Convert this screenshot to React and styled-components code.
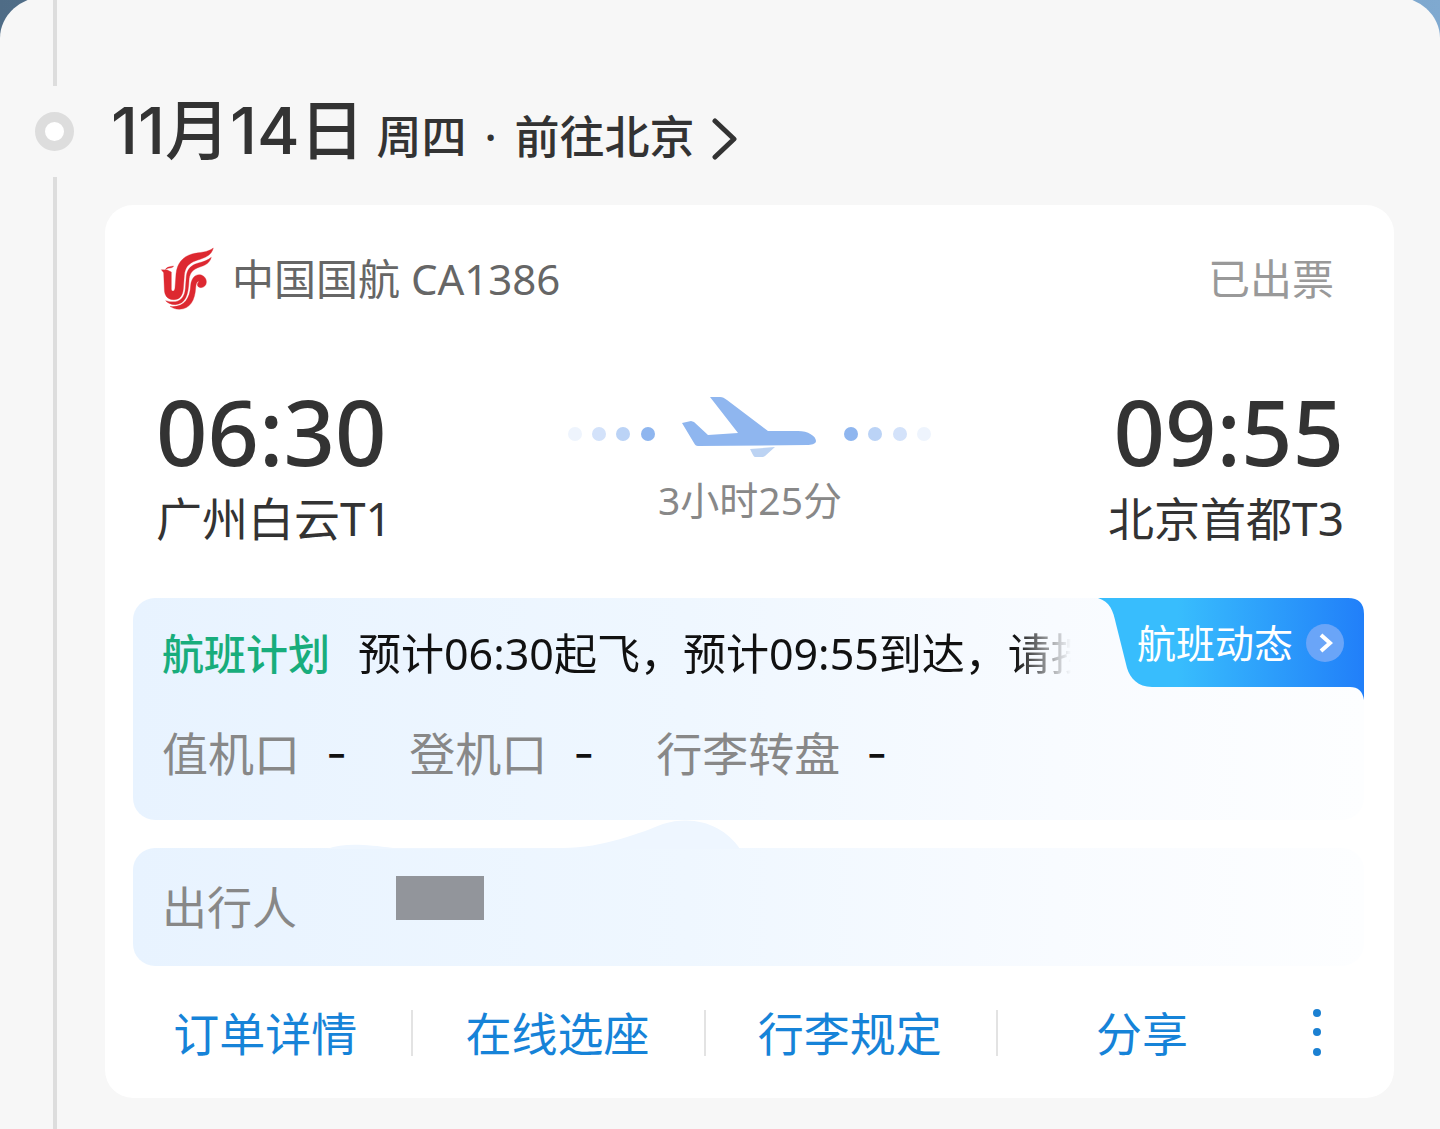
import React from "react";
import styled, { createGlobalStyle } from "styled-components";

const GlobalStyle = createGlobalStyle`
* {
  box-sizing: border-box;
}
body {
  margin: 0;
  font-family: "Noto Sans", "Noto Sans CJK SC", sans-serif;
  color: #333;
}
h1, h2, p, dl, dd, dt {
  margin: 0;
  font-size: inherit;
  font-weight: 400;
}
button {
  border: 0;
  padding: 0;
  background: none;
  font: inherit;
  color: inherit;
  cursor: pointer;
}
a {
  color: inherit;
  text-decoration: none;
}
svg {
  display: block;
}
`

const Page = styled.div`
min-height: 100vh;
overflow: hidden;
background: linear-gradient(90deg, #4f6c86 0%, #7fa9d0 100%);
`

const Sheet = styled.main`
display: flex;
min-height: 100vh;
margin-top: -4px;
padding: 4px 46px 31px 0;
border-radius: 48px 48px 0 0 / 42px 42px 0 0;
background: #f7f7f7;
`

const Rail = styled.div`
flex: 0 0 105px;
display: flex;
flex-direction: column;
align-items: center;
gap: 26px;
margin-bottom: -31px;
padding-left: 4px;
`

const RailLine = styled.div`
width: 4px;
flex: ${({ $grow }) => ($grow ? "1" : "0 0 86px")};
background: #ddd;
`

const RailDot = styled.div`
width: 39px;
height: 39px;
border: 10px solid #ddd;
border-radius: 50%;
background: #fff;
`

const Content = styled.div`
flex: 1;
min-width: 0;
`

const DayLink = styled.a`
display: flex;
align-items: baseline;
height: 205px;
padding: 83px 0 0 6px;
color: #333;
`

const DayDate = styled.h1`
margin-right: 12px;
font-family: Inter, "Noto Sans CJK SC", sans-serif;
font-size: 65px;
line-height: 96px;
font-weight: 500;
`

const DayInfo = styled.span`
font-size: 45px;
line-height: 60px;
font-weight: 500;
`

const DayDot = styled(DayInfo)`
width: 48px;
text-align: center;
`

const DayArrow = styled.svg`
width: 26px;
height: 42px;
margin: 35px 0 0 17px;
align-self: flex-start;
`

const Card = styled.section`
padding: 0 30px 0 28px;
border-radius: 28px;
background: #fff;
`

const CardHeader = styled.header`
display: flex;
align-items: center;
height: 148px;
padding: 0 30px 0 25px;
font-size: 42px;
line-height: 60px;
color: #666;
`

const AirlineLogo = styled.svg`
width: 60px;
height: 66px;
margin-right: 14px;
`

const Status = styled.span`
margin-left: auto;
color: #999;
`

const Route = styled.div`
display: flex;
justify-content: space-between;
height: 245px;
padding: 30px 20px 0 23px;
`

const Stop = styled.div`
text-align: ${({ $end }) => ($end ? "right" : "left")};
`

const Time = styled.p`
font-size: 90px;
line-height: 96px;
font-weight: 500;
`

const Airport = styled.p`
font-size: 46px;
line-height: 78px;
`

const Leg = styled.div`
display: flex;
flex-direction: column;
align-items: center;
padding-top: 12px;
font-size: 39px;
line-height: 54px;
color: #888;
`

const LegArt = styled.svg`
width: 364px;
height: 64px;
margin-bottom: 14px;
`

const Panel = styled.div`
position: relative;
border-radius: 22px;
background: linear-gradient(90deg, #e8f3ff 0%, #eff7ff 45%, #f8fbff 75%, #fdfeff 100%);
`

const StatusPanel = styled(Panel)`
height: 222px;
margin-bottom: 28px;
padding: 26px 29px;
`

const Notice = styled.div`
display: flex;
gap: 28px;
margin-right: 240px;
font-size: 42px;
line-height: 60px;
`

const NoticeTitle = styled.h2`
flex: none;
font-weight: 500;
color: #18ad7c;
`

const NoticeText = styled.p`
flex: 1;
overflow: hidden;
white-space: nowrap;
font-size: 43px;
color: #111;
mask-image: linear-gradient(90deg, #000 calc(100% - 80px), transparent calc(100% - 24px));
`

const Gates = styled.dl`
display: flex;
gap: 62px;
margin-top: 37px;
font-size: 46px;
line-height: 64px;
`

const Gate = styled.div`
display: flex;
gap: 26px;
`

const GateName = styled.dt`
color: #888;
`

const GateValue = styled.dd`
font-family: Inter, sans-serif;
color: #111;
`

const LiveButton = styled.button`
position: absolute;
top: 0;
right: 0;
width: 266px;
height: 102px;
`

const LiveShape = styled.svg`
position: absolute;
inset: 0;
`

const LiveLabel = styled.span`
position: relative;
display: flex;
align-items: center;
gap: 12px;
height: 90px;
margin-bottom: 12px;
padding-left: 39px;
font-size: 39px;
line-height: 56px;
color: #fff;
`

const TravelerPanel = styled(Panel)`
display: flex;
height: 118px;
padding: 0 29px;
font-size: 45px;
line-height: 120px;
color: #888;
`

const Bump = styled.svg`
position: absolute;
left: 190px;
top: -28px;
`

const HiddenName = styled.span`
width: 88px;
height: 44px;
margin: 28px 0 0 99px;
background: #92959b;
`

const Actions = styled.nav`
display: flex;
align-items: center;
height: 132px;
margin: 0 -14px;
padding: 2px 32px 0 0;
font-size: 46px;
line-height: 64px;
color: #1683d8;
`

const Action = styled.a`
flex: 1;
text-align: center;
& + & {
  background: linear-gradient(#e3e3e3, #e3e3e3) left center / 2px 46px no-repeat;
}
`

const MoreButton = styled.button`
display: flex;
justify-content: center;
width: 58px;
`

const dots = [
  { x: 7, color: "#eef4fd" },
  { x: 31, color: "#d3e2fa" },
  { x: 55, color: "#bbd3f6" },
  { x: 80, color: "#8fb6ef" },
  { x: 283, color: "#8fb6ef" },
  { x: 307, color: "#bbd3f6" },
  { x: 332, color: "#d3e2fa" },
  { x: 356, color: "#eef4fd" },
];

const gates = [
  { name: "值机口", value: "-" },
  { name: "登机口", value: "-" },
  { name: "行李转盘", value: "-" },
];

const actions = ["订单详情", "在线选座", "行李规定", "分享"];

function Logo() {
  return (
    <AirlineLogo viewBox="24 20 180 198" role="img" aria-label="中国国航">
      <g fill="#dd2830" stroke="#dd2830" strokeWidth="1" strokeLinejoin="round">
        <path d="M190 26C184 52 158 57 138 64C114 72 105 86 103 108L100 148C98 170 88 182 70 181C50 180 43 166 43 148L41 100L34 91L52 92L64 98L64 148C64 158 74 158 75 146L78 104C81 72 98 52 126 44C150 38 172 40 190 26Z" />
        <path d="M184 54C178 77 156 80 142 86C124 94 118 106 117 124C115 166 107 194 76 196C62 196 52 190 47 184C86 196 104 176 106 148L109 110C112 86 127 76 145 71C160 67 172 64 184 54Z" />
        <path d="M122 138C124 114 139 102 154 107C175 114 174 144 153 145C142 145 138 133 147 127C142 124 138 132 137 146C135 182 121 209 88 210C76 210 66 205 60 201C98 206 120 182 122 138Z" />
        <path d="M46 91C50 82 60 82 71 80C68 86 60 86 54 87Z" />
      </g>
    </AirlineLogo>
  );
}

function FlightCard() {
  return (
    <Card>
      <CardHeader>
        <Logo />
        <span>中国国航 CA1386</span>
        <Status>已出票</Status>
      </CardHeader>

      <Route>
        <Stop>
          <Time>06:30</Time>
          <Airport>广州白云T1</Airport>
        </Stop>
        <Leg>
          <LegArt viewBox="0 0 364 64" aria-hidden="true">
            {dots.map((dot) => (
              <circle key={dot.x} cx={dot.x} cy="39" r="7" fill={dot.color} />
            ))}
            <path fill="#8fb6ef" d="M142 2L152 2C155 2 156 3 159 5L200 36L230 36C240 36 248 41 248 46C248 49 243 50 239 50L130 51C128 51 127 50 126 48L114 28L123 26L126 27L140 40L170 38Z" />
            <path fill="#bcd3f3" d="M182 54L207 52L197 61Q196 62 194 62L187 62Q186 62 185 60Z" />
          </LegArt>
          <p>3小时25分</p>
        </Leg>
        <Stop $end>
          <Time>09:55</Time>
          <Airport>北京首都T3</Airport>
        </Stop>
      </Route>

      <StatusPanel>
        <Notice>
          <NoticeTitle>航班计划</NoticeTitle>
          <NoticeText>预计06:30起飞，预计09:55到达，请按</NoticeText>
        </Notice>
        <Gates>
          {gates.map((gate) => (
            <Gate key={gate.name}>
              <GateName>{gate.name}</GateName>
              <GateValue>{gate.value}</GateValue>
            </Gate>
          ))}
        </Gates>
        <LiveButton type="button">
          <LiveShape width="266" height="102" viewBox="0 0 266 102" aria-hidden="true">
            <defs>
              <linearGradient id="live" x1="0" x2="1" y1="0" y2="0">
                <stop offset="0.3" stopColor="#38bdfd" />
                <stop offset="1" stopColor="#217ff9" />
              </linearGradient>
            </defs>
            <path fill="url(#live)" d="M0 0H250Q266 0 266 16V102Q264 89 252 89H54C40 89 32 80 29 70L18 26C15 12 12 4 0 0Z" />
          </LiveShape>
          <LiveLabel>
            航班动态
            <svg width="40" height="40" viewBox="0 0 40 40" aria-hidden="true">
              <circle cx="20" cy="20" r="19" fill="#6aa5f8" />
              <path d="M16 12L25 20L16 28" fill="none" stroke="#fff" strokeWidth="4" />
            </svg>
          </LiveLabel>
        </LiveButton>
      </StatusPanel>

      {/* traveller name stays masked */}
      <TravelerPanel>
        <Bump width="420" height="30" viewBox="0 0 420 30" aria-hidden="true">
          <path fill="#eef6ff" d="M4 29C20 23 40 24 70 28L240 28C280 28 320 12 340 4C372 -6 402 6 417 29Z" />
        </Bump>
        <span>出行人</span>
        <HiddenName />
      </TravelerPanel>

      <Actions>
        {actions.map((label) => (
          <Action key={label} href="#">{label}</Action>
        ))}
        <MoreButton type="button" aria-label="更多">
          <svg width="10" height="48" viewBox="0 0 10 48" fill="#1b80d2">
            <circle cx="5" cy="4" r="4" />
            <circle cx="5" cy="23" r="4" />
            <circle cx="5" cy="43" r="4" />
          </svg>
        </MoreButton>
      </Actions>
    </Card>
  );
}

function App() {
  return (
    <Page>
      <GlobalStyle />
      <Sheet>
        <Rail>
          <RailLine />
          <RailDot />
          <RailLine $grow />
        </Rail>
        <Content>
          <DayLink href="#">
            <DayDate>11月14日</DayDate>
            <DayInfo>周四</DayInfo>
            <DayDot>·</DayDot>
            <DayInfo>前往北京</DayInfo>
            <DayArrow viewBox="0 0 26 42" aria-hidden="true">
              <path d="M3 3L22 21L3 39" fill="none" stroke="#333" strokeWidth="5" strokeLinecap="round" strokeLinejoin="round" />
            </DayArrow>
          </DayLink>
          <FlightCard />
        </Content>
      </Sheet>
    </Page>
  );
}

export default App;
